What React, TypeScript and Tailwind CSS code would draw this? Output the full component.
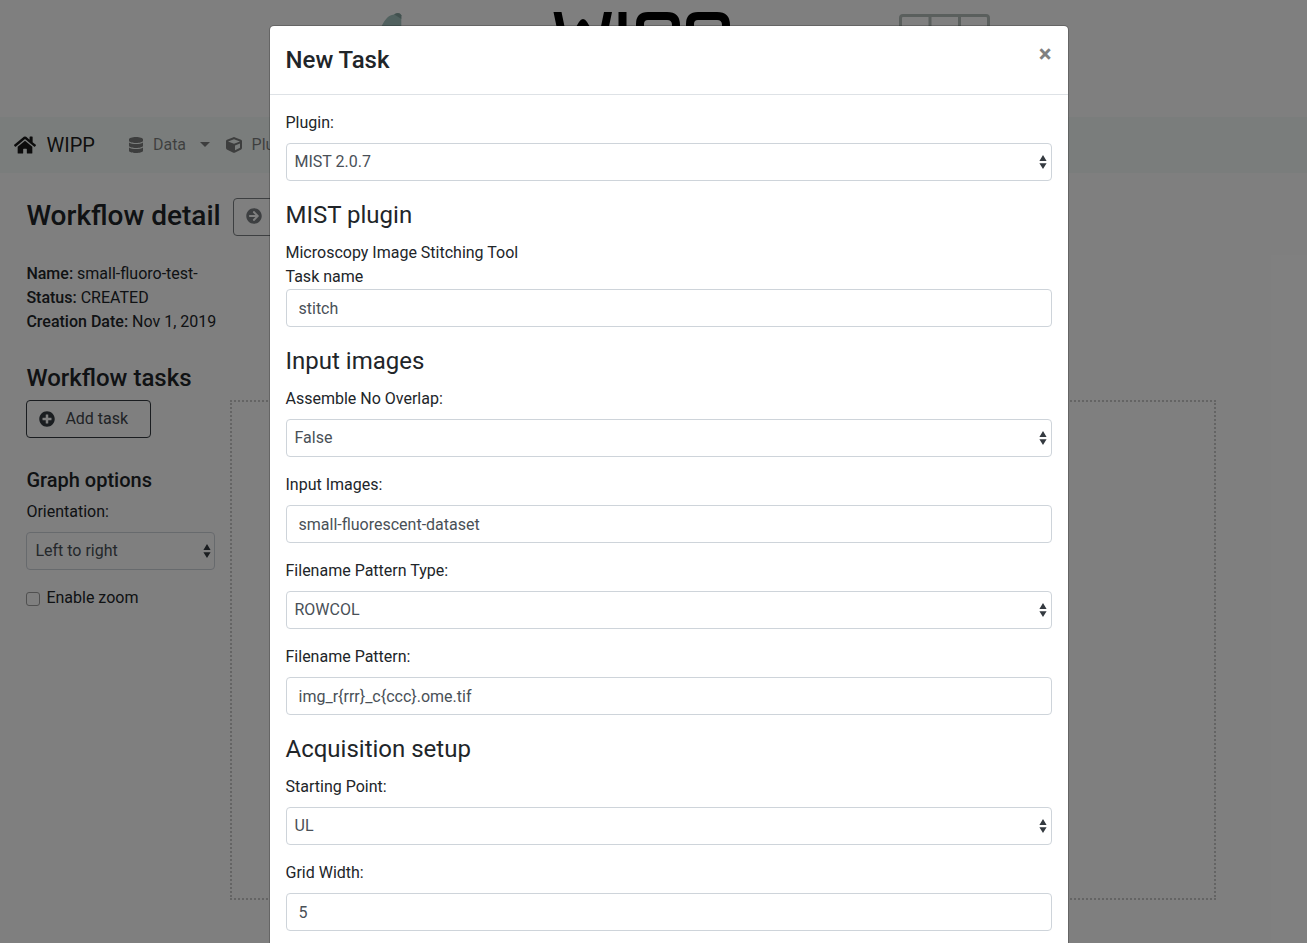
import type { ReactNode } from "react";
import { FaHome, FaDatabase, FaCube, FaArrowCircleRight, FaPlusCircle } from "react-icons/fa";

function Caret() {
  return (
    <svg width="8" height="14" viewBox="0 0 8 14" fill="#343a40" className="shrink-0">
      <path d="M4 0 7.6 6H.4zM4 14 .4 8.2h7.2z" />
    </svg>
  );
}

function Select({ value, className = "" }: { value: string; className?: string }) {
  return (
    <div className={`flex h-[38px] items-center justify-between rounded border border-[#ced4da] pr-[3.500px] pl-2 text-[#495057] ${className}`}>
      <span>{value}</span>
      <Caret />
    </div>
  );
}

function Input({ value }: { value: string }) {
  return (
    <input
      readOnly
      value={value}
      className="block h-[38px] w-full rounded border border-[#ced4da] px-3 text-[#495057] outline-none"
    />
  );
}

function Field({ label, children }: { label: string; children: ReactNode }) {
  return (
    <div className="mb-4">
      <div className="mb-2 h-6 leading-[23px]">{label}</div>
      {children}
    </div>
  );
}

function Heading({ children }: { children: ReactNode }) {
  return <h4 className="mb-2 h-9 text-2xl leading-9">{children}</h4>;
}

function Logos() {
  return (
    <svg width="1307" height="117" viewBox="0 0 1307 117" fill="none" className="block">
      <path d="M379 32C384 20 388 15 394 14.500q5-2 7.300.5v18z" fill="#a2c3be" />
      <path d="M394 14.200q5.500-3 7.300 1v3.800z" fill="#85a39f" />
      <path d="M553.500 12h8l5 24h-8zM604 12h8l-5 24h-8zM618.500 12h8v24h-8zM574 32q5-13 9-13t9 13z" fill="#000" />
      <path d="M640 36V24q0-8 8-8h19q9 0 9 9v11M690 36V24q0-8 8-8h19q9 0 9 9v11" stroke="#000" strokeWidth="8" />
      <path d="M900.500 36V18q0-2.500 2.500-2.500h83q2.500 0 2.500 2.500v18M930 16v20M959.500 16v20" stroke="#b4bebb" strokeWidth="3" />
    </svg>
  );
}

function Navbar() {
  return (
    <nav className="flex h-14 items-center bg-[#f5faf8]">
      <FaHome className="ml-3.5 h-[22px] w-[22px] text-black/90" />
      <span className="ml-[10.500px] text-xl text-black/90">WIPP</span>
      <div className="-mt-px ml-[33.500px] flex items-center text-black/50">
        <FaDatabase className="h-4 w-4" />
        <span className="ml-[8.500px]">Data</span>
        <span className="ml-3.5 border-x-[5px] border-t-[5px] border-x-transparent border-t-black/50" />
        <FaCube className="ml-[15.500px] h-4 w-4" />
        <span className="ml-2.5">Plugins</span>
      </div>
    </nav>
  );
}

function Sidebar() {
  return (
    <aside className="w-[190px] shrink-0">
      <h3 className="h-[34px] text-2xl font-medium leading-[34px]">Workflow tasks</h3>
      <button className="mt-[5px] flex h-[38px] w-[125px] items-center rounded border border-[#343a40] pl-3 text-[#343a40]">
        <FaPlusCircle className="-mt-px h-4 w-4" />
        <span className="ml-2.5 text-[#41464c]">Add task</span>
      </button>
      <h5 className="mt-[30px] h-6 text-xl font-medium leading-6">Graph options</h5>
      <div className="mt-2 h-6 leading-[23px]">Orientation:</div>
      <Select value="Left to right" className="mt-2 w-[189px]" />
      <label className="mt-4 flex h-6 items-center">
        <span className="mt-[2px] h-[14px] w-[14px] rounded-[3px] border border-[#a0a0a0]" />
        <span className="ml-1.5">Enable zoom</span>
      </label>
    </aside>
  );
}

function Page() {
  return (
    <div>
      <Logos />
      <Navbar />
      <main className="px-[26.400px] pt-[25px]">
        <div className="flex h-[38px] items-center">
          <h2 className="-mt-0.5 w-[207px] whitespace-nowrap text-[28px] font-medium leading-[34px]">Workflow detail</h2>
          <button className="flex h-[38px] w-[130px] items-center rounded border border-[#7b7f83] pl-3 text-[#7b7f83]">
            <FaArrowCircleRight className="-mt-0.5 h-4 w-4" />
          </button>
        </div>
        <div className="mt-[26px] leading-6">
          <div><b className="font-medium">Name:</b> small-fluoro-test-</div>
          <div><b className="font-medium">Status:</b> CREATED</div>
          <div><b className="font-medium">Creation Date:</b> Nov 1, 2019</div>
        </div>
        <div className="mt-[27px] flex">
          <Sidebar />
          <div className="mt-[39px] ml-3.5 h-[500px] w-[986px] shrink-0 border-2 border-dotted border-[#c8c8c8]" />
        </div>
      </main>
    </div>
  );
}

function TaskModal() {
  return (
    <div className="absolute top-[25px] left-[268.500px] w-[800px] rounded-[5px] border border-black/20 bg-white bg-clip-padding">
      <header className="flex h-[69px] justify-between border-b border-[#dee2e6] p-4">
        <h4 className="text-2xl font-medium leading-9">New Task</h4>
        <span className="text-2xl font-bold leading-none text-[#808080]">×</span>
      </header>
      <div className="p-4">
        <Field label="Plugin:"><Select value="MIST 2.0.7" /></Field>
        <Heading>MIST plugin</Heading>
        <div className="h-6 leading-[23px]">Microscopy Image Stitching Tool</div>
        <div className="h-6 leading-[23px]">Task name</div>
        <div className="mb-4"><Input value="stitch" /></div>
        <Heading>Input images</Heading>
        <Field label="Assemble No Overlap:"><Select value="False" /></Field>
        <Field label="Input Images:"><Input value="small-fluorescent-dataset" /></Field>
        <Field label="Filename Pattern Type:"><Select value="ROWCOL" /></Field>
        <Field label="Filename Pattern:"><Input value="img_r{rrr}_c{ccc}.ome.tif" /></Field>
        <Heading>Acquisition setup</Heading>
        <Field label="Starting Point:"><Select value="UL" /></Field>
        <Field label="Grid Width:"><Input value="5" /></Field>
      </div>
    </div>
  );
}

export default function App() {
  return (
    <div className="relative h-[943px] w-[1307px] overflow-hidden bg-white font-['Roboto',sans-serif] text-base text-[#212529]">
      <Page />
      <div className="absolute inset-0 bg-black/50" />
      <TaskModal />
    </div>
  );
}
